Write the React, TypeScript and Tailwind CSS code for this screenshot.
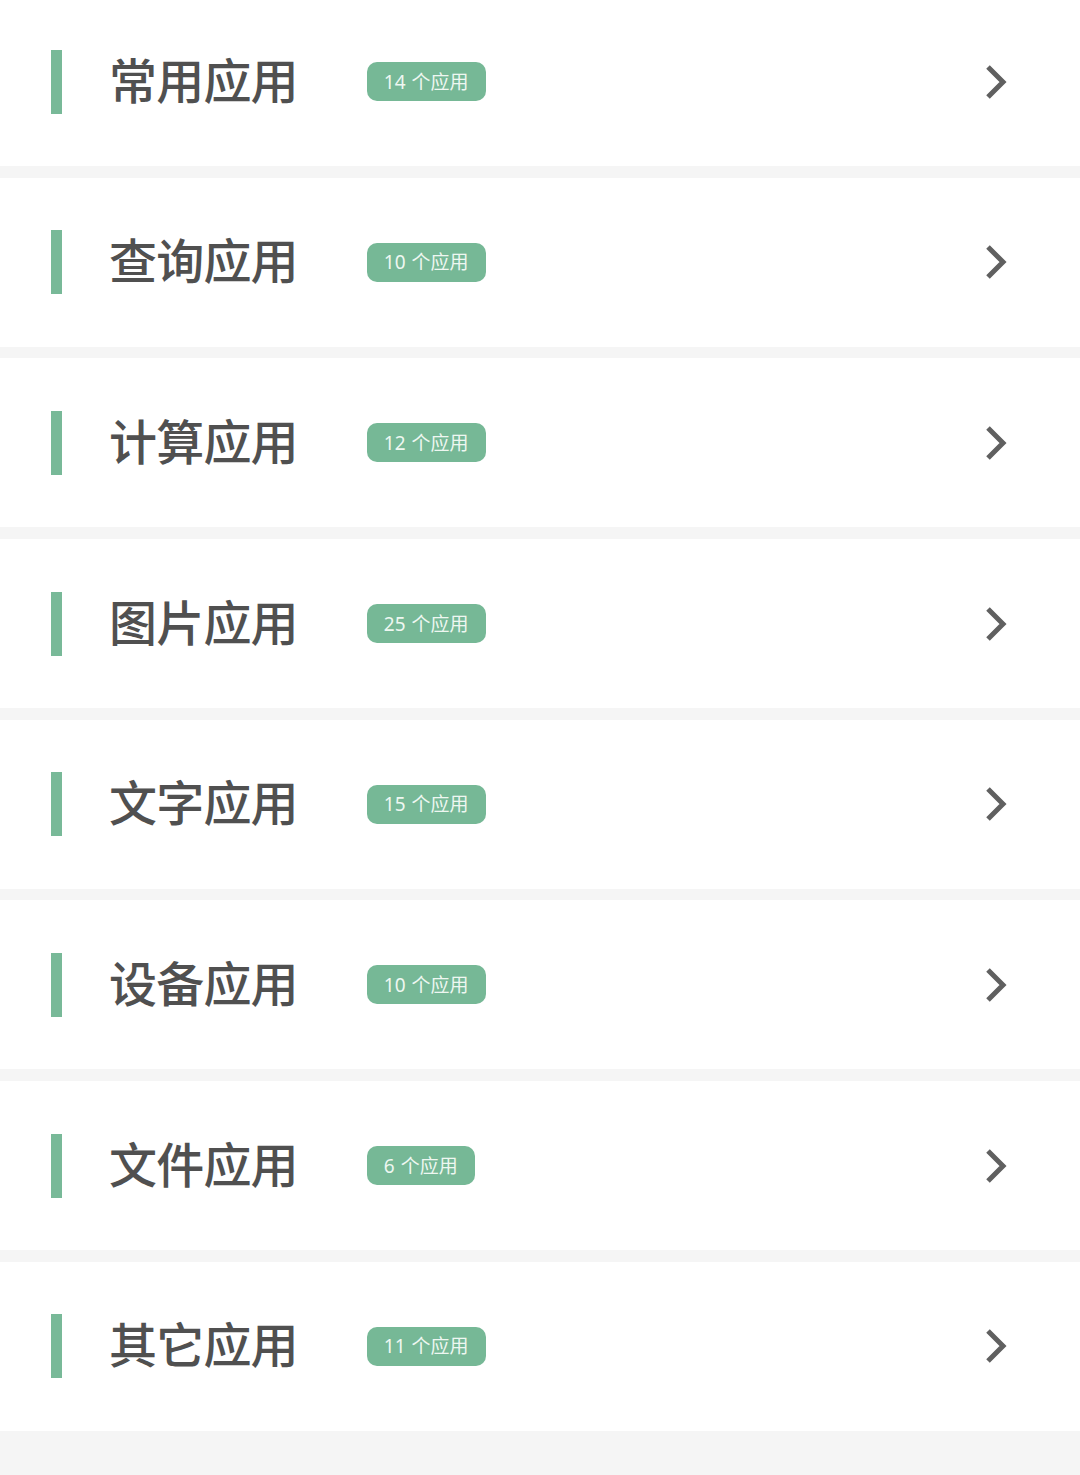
import React from "react";

const items = [
  { name: "常用应用", count: 14 },
  { name: "查询应用", count: 10 },
  { name: "计算应用", count: 12 },
  { name: "图片应用", count: 25 },
  { name: "文字应用", count: 15 },
  { name: "设备应用", count: 10 },
  { name: "文件应用", count: 6 },
  { name: "其它应用", count: 11 },
];

function Chevron() {
  return (
    <svg width="24" height="36" viewBox="0 0 24 36" fill="none">
      <polyline
        points="4,3 19,18 4,33"
        stroke="#606060"
        strokeWidth="5"
        strokeLinecap="butt"
        strokeLinejoin="miter"
      />
    </svg>
  );
}

export default function App() {
  return (
    <div
      className="w-[1080px] h-[1475px] overflow-hidden bg-[#f5f5f5] flex flex-col gap-[11.7px]"
      style={{ fontFamily: '"Noto Sans CJK SC", "Noto Sans", sans-serif' }}
    >
      {items.map((it, i) => (
        <div
          key={i}
          className={`shrink-0 h-[169px] bg-white flex items-center ${i === 0 ? "-mt-[3px]" : ""}`}
        >
          <div className="ml-[51px] w-[11px] h-[64px] bg-[#78b998]" />
          <div className="ml-[47px] mb-[8px] text-[48px] leading-none font-medium text-[#505050] tracking-[-0.8px]">
            {it.name}
          </div>
          <div className="ml-[69px] h-[39px] rounded-[10px] bg-[#76b896] flex items-center pl-[17px] pr-[17px] text-[19px] leading-none text-[#eef7f1]">
            <span className="block pb-[1px]">
              <span style={{ fontFamily: '"Noto Sans", sans-serif' }}>{it.count}</span>
              <span className="ml-[6px]">个应用</span>
            </span>
          </div>
          <div className="ml-auto mr-[72px] flex items-center">
            <Chevron />
          </div>
        </div>
      ))}
    </div>
  );
}
